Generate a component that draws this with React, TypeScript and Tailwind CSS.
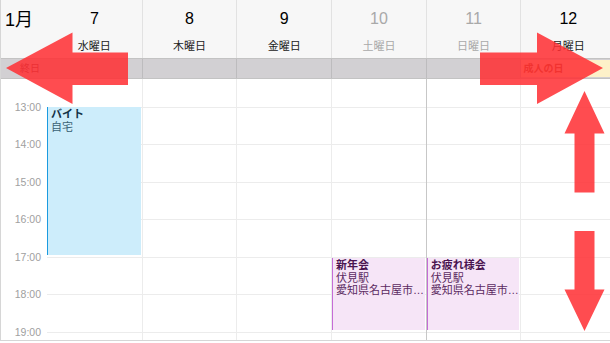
import React from "react";

interface Day {
  date: number;
  label: string;
  muted?: boolean;
}

interface CalEvent {
  col: number;
  top: number;
  height: number;
  lines: string[];
  kind: "blue" | "purple";
}

const days: Day[] = [
  { date: 7, label: "水曜日" },
  { date: 8, label: "木曜日" },
  { date: 9, label: "金曜日" },
  { date: 10, label: "土曜日", muted: true },
  { date: 11, label: "日曜日", muted: true },
  { date: 12, label: "月曜日" },
];

const hours = ["13:00", "14:00", "15:00", "16:00", "17:00", "18:00", "19:00"];

// top offsets are measured from the start of the time body
const events: CalEvent[] = [
  { col: 0, top: 28, height: 148, lines: ["バイト", "自宅"], kind: "blue" },
  { col: 3, top: 179, height: 72, lines: ["新年会", "伏見駅", "愛知県名古屋市…"], kind: "purple" },
  { col: 4, top: 179, height: 72, lines: ["お疲れ様会", "伏見駅", "愛知県名古屋市…"], kind: "purple" },
];

const font = { fontFamily: '"Liberation Sans", "Noto Sans CJK JP", sans-serif' };

const EventBlock = ({ ev }: { ev: CalEvent }) => {
  const blue = ev.kind === "blue";
  return (
    <div
      className={`absolute left-0 right-px px-[3px] pt-[1px] text-[11px] leading-[12.5px] overflow-hidden ${
        blue
          ? "bg-[#cdedfb] border-l-[1.5px] border-[#1b9be0] text-[#3a6275]"
          : "bg-[#f6e5f7] border-l-[1.5px] border-[#c56cd6] text-[#5b2a61]"
      }`}
      style={{ top: ev.top, height: ev.height }}
    >
      {ev.lines.map((l, i) => (
        <div
          key={i}
          className={`whitespace-nowrap ${i === 0 ? (blue ? "font-bold text-[#123247]" : "font-bold text-[#4a1450]") : ""}`}
        >
          {l}
        </div>
      ))}
    </div>
  );
};

const Arrows = () => (
  <svg className="absolute inset-0 pointer-events-none" width="610" height="343" viewBox="0 0 610 343">
    <g fill="#ff2e33" fillOpacity="0.86">
      {/* left */}
      <polygon points="6,68 72.5,32.5 72.5,52.5 128,52.5 128,85 72.5,85 72.5,104" />
      {/* right */}
      <polygon points="603,68 537,32.5 537,52.5 480,52.5 480,85 537,85 537,104" />
      {/* up */}
      <polygon points="584.5,91 564.5,133.5 574.5,133.5 574.5,192.5 594.5,192.5 594.5,133.5 604.5,133.5" />
      {/* down */}
      <polygon points="584.5,331 564.5,289.5 574.5,289.5 574.5,231 594.5,231 594.5,289.5 604.5,289.5" />
    </g>
  </svg>
);

export default function App() {
  return (
    <div className="relative w-[610px] h-[343px] bg-white overflow-hidden" style={font}>
      <div className="flex flex-col h-[341px] border-l border-b border-[#d6d6d6]">
        {/* Header */}
        <div className="flex h-[58px] bg-[#f7f7f7] shrink-0">
          <div className="w-[46px] shrink-0 pl-1 pt-[7px] text-[18px] text-black">1月</div>
          {days.map((d, i) => (
            <div
              key={d.date}
              className={`w-[94.7px] shrink-0 flex flex-col items-center ${
                i === 0 ? "" : "border-l border-[#e2e2e2]"
              } ${d.muted ? "text-[#a9a9a9]" : "text-black"}`}
            >
              <div className="text-[16px] leading-[18px] mt-[10px]">{d.date}</div>
              <div className={`text-[11px] leading-[14px] mt-[11px] ${d.muted ? "" : "text-[#222]"}`}>{d.label}</div>
            </div>
          ))}
        </div>

        {/* All-day row */}
        <div className="flex h-[21px] shrink-0 bg-[#d2d0d3] border-y border-[#c3c3c3]">
          <div className="w-[46px] shrink-0 pl-[19px] text-[10px] leading-[19px] text-[#6a3a3a]">終日</div>
          {days.map((d, i) => (
            <div
              key={d.date}
              className={`w-[94.7px] shrink-0 flex items-center ${i === 0 ? "" : "border-l border-[#bdbcbe]"}`}
            >
              {i === 5 && (
                <div className="w-full h-[17px] bg-[#fdf1c9] pl-[2px] text-[10px] leading-[17px] font-bold text-[#9c4a20]">
                  成人の日
                </div>
              )}
            </div>
          ))}
        </div>

        {/* Time body */}
        <div className="flex flex-1 overflow-hidden">
          <div className="w-[46px] shrink-0 flex flex-col">
            <div className="h-[27.5px] shrink-0" />
            {hours.map((h) => (
              <div key={h} className="h-[37.5px] shrink-0 flex items-start justify-end pr-[6px]">
                <span className="-translate-y-1/2 text-[10.5px] leading-[12px] text-[#a0a0a0]">{h}</span>
              </div>
            ))}
          </div>
          {days.map((d, ci) => (
            <div
              key={d.date}
              className={`relative w-[94.7px] shrink-0 flex flex-col ${
                ci === 0 ? "" : ci === 4 ? "border-l border-[#c7c7c7]" : "border-l border-[#ececec]"
              }`}
            >
              <div className="h-[27.5px] shrink-0" />
              {hours.map((h) => (
                <div key={h} className="h-[37.5px] shrink-0 border-t border-[#ececec]" />
              ))}
              {events
                .filter((e) => e.col === ci)
                .map((e, i) => (
                  <EventBlock key={i} ev={e} />
                ))}
            </div>
          ))}
        </div>
      </div>
      <Arrows />
    </div>
  );
}
